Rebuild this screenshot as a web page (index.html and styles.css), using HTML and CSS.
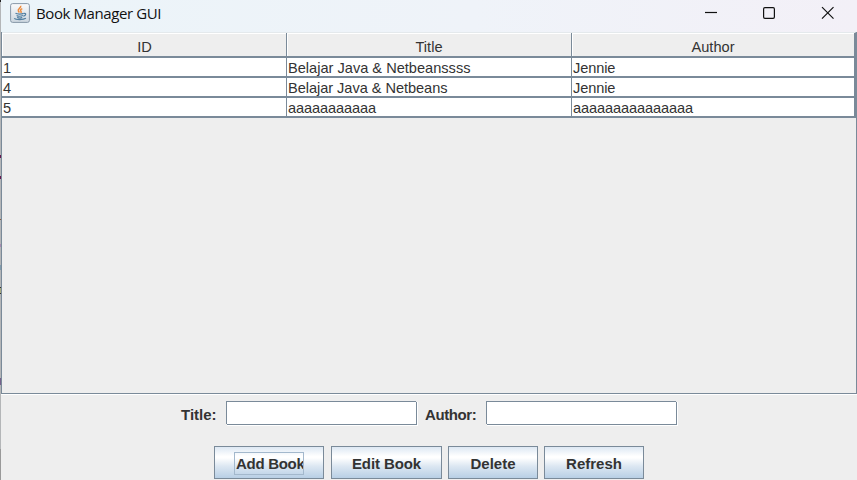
FILE: index.html
```html
<!DOCTYPE html>
<html lang="en">
<head>
<meta charset="utf-8">
<title>Book Manager GUI</title>
<link rel="stylesheet" href="styles.css">
</head>
<body>
<div class="edge"></div>
<main class="window">
  <header class="titlebar">
    <svg class="java" width="20" height="20" viewBox="0 0 20 20" fill="none">
      <defs><linearGradient id="tile" x1="0" y1="0" x2="0" y2="1"><stop stop-color="#fafbfc"/><stop offset="1" stop-color="#ccd6df"/></linearGradient></defs>
      <rect x=".6" y=".6" width="18.8" height="18.8" rx="2" fill="url(#tile)" stroke="#8798a8"/>
      <path d="M10.7 2.8c.8 2.3-3.7 3-2.3 5.3l1 1.4M12.3 5.6c-2.5 1.2-2 2-1.2 2.8.4.5 0 1-.5 1.4" stroke="#ee8b3c" stroke-width="1.5"/>
      <path d="M5.5 10.3c1.5 1 6.5.9 8 .1M6.6 12.5c1.5.8 4.5.8 6.3 0M7.2 14.3c1.3.8 3.8.7 5 0M13.7 10.5c3-.7 2.4 2.3-.4 2.7M4.2 15.3c1.5 1.6 9 1.7 11.7 0" stroke="#537fa0" stroke-width="1.2"/>
    </svg>
    <h1>Book Manager GUI</h1>
    <svg class="controls" width="132" height="14" viewBox="0 0 132 14" fill="none" stroke="#111" stroke-width="1.2">
      <path d="M1 6.5h12"/>
      <rect x="59.6" y="1.6" width="10.8" height="10.8" rx="1.3"/>
      <path d="M118 1.2l11.5 11.5M129.5 1.2L118 12.7"/>
    </svg>
  </header>
  <section class="scroll">
    <div class="grid head"><div>ID</div><div>Title</div><div>Author</div></div>
    <div class="grid row"><div>1</div><div>Belajar Java &amp; Netbeanssss</div><div>Jennie</div></div>
    <div class="grid row second"><div>4</div><div>Belajar Java &amp; Netbeans</div><div>Jennie</div></div>
    <div class="grid row tight"><div>5</div><div>aaaaaaaaaaa</div><div>aaaaaaaaaaaaaaa</div></div>
  </section>
  <form class="fields">
    <label for="t">Title:</label><input id="t" type="text">
    <label class="author" for="a">Author:</label><input id="a" type="text">
  </form>
  <nav class="buttons">
    <button class="add"><span>Add Book</span></button>
    <button class="edit">Edit Book</button>
    <button class="delete">Delete</button>
    <button class="refresh">Refresh</button>
  </nav>
</main>
</body>
</html>
```
FILE: styles.css
```css
* { box-sizing: border-box; }
body {
  margin: 0;
  width: 857px;
  height: 480px;
  overflow: hidden;
  display: flex;
  background: #eee;
  color: #333;
  font: 15px/18px "Liberation Sans", sans-serif;
}
.edge {
  width: 1px;
  background: linear-gradient(#222 0 2px, #b4b6b8 2px 155px, #651850 155px 158px, #b4b6b8 158px 176px, #651850 176px 179px, #b4b6b8 179px 219px, #875c40 219px 220px, #b4b6b8 220px 244px, #a78bb0 244px 247px, #b4b6b8 247px 265px, #819cad 265px 270px, #b4b6b8 270px 287px, #333 287px 288px, #a7aa80 288px 293px, #333 293px 294px, #b4b6b8 294px 378px, #76618c 378px 385px, #b4b6b8 385px 449px, #999 449px);
}
.window { width: 856px; display: flex; flex-direction: column; }
.titlebar {
  height: 32px;
  display: flex;
  align-items: flex-start;
  background: linear-gradient(90deg, #ebf4f9, #eff3f9 55%, #f3f0f7);
}
.java { margin: 3px 0 0 9px; }
h1 {
  margin: 3px 0 0 6px;
  font: 400 15px/20px "Open Sans", sans-serif;
  letter-spacing: -.4px;
  color: #111;
  white-space: nowrap;
}
.controls { margin: 6px 21px 0 auto; }
.scroll {
  height: 362px;
  border-left: 1px solid #7a8a99;
  border-right: 1px solid #7a8a99;
  border-bottom: 1px solid #7a8a99;
  box-shadow: 0 1px #fff;
  font-size: 14.6px;
}
.grid {
  display: grid;
  grid-template-columns: 285px 285px 283px;
  width: 854px;
  border-right: 1px solid #7a8a99;
}
.grid div { border-right: 1px solid #7a8a99; border-bottom: 2px solid #7a8a99; white-space: nowrap; }
.head { height: 26px; line-height: 28px; text-align: center; border-top: 1px solid #e4e9ec; }
.head div { height: 25px; box-shadow: inset 1px 1px #fff; }
.row { background: #fff; height: 20px; line-height: 20px; }
.row div { height: 20px; padding-left: 1px; }
.row div:last-child, .tight { letter-spacing: -.12px; }
.second { letter-spacing: -.05px; }
.grid div:first-child { padding-left: 1px; }
.fields {
  margin: 7px 0 0 180px;
  display: flex;
  height: 24px;
  font-weight: bold;
  line-height: 28px;
}
.fields label { width: 45px; white-space: nowrap; }
.fields .author { width: 61px; margin-left: 8px; letter-spacing: -.4px; }
.fields input {
  width: 191px;
  height: 24px;
  padding: 0 3px;
  border: 1px solid #7a8a99;
  border-radius: 0;
  background: #fff;
  box-shadow: 1px 1px #fff;
  outline: 0;
  flex: none;
  clip-path: polygon(0 0, 190px 0, 190px 1px, 192px 1px, 192px 25px, 1px 25px, 1px 23px, 0 23px);
}
.fields label:first-child { flex: none; }
.buttons { display: flex; gap: 7px; margin: 21px 0 0 213px; }
.buttons button {
  height: 33px;
  padding: 2px 0 0;
  border: 1px solid #7a8a99;
  background: linear-gradient(#dde8f3, #fff 30%, #fff 35%, #dce7f2 62%, #b8cfe5);
  color: #333;
  font: bold 15px/22px "Liberation Sans", sans-serif;
}
.add { width: 110px; }
.add span { display: block; width: 70px; height: 23px; margin: -1px auto 0; padding-left: 1px; border: 1px solid #a3b8cc; white-space: nowrap; letter-spacing: -.3px; overflow: hidden; text-align: left; }
.buttons .edit { width: 111px; letter-spacing: -.1px; }
.delete { width: 90px; margin-left: -1px; }
.refresh { width: 100px; margin-left: -1px; }
```
